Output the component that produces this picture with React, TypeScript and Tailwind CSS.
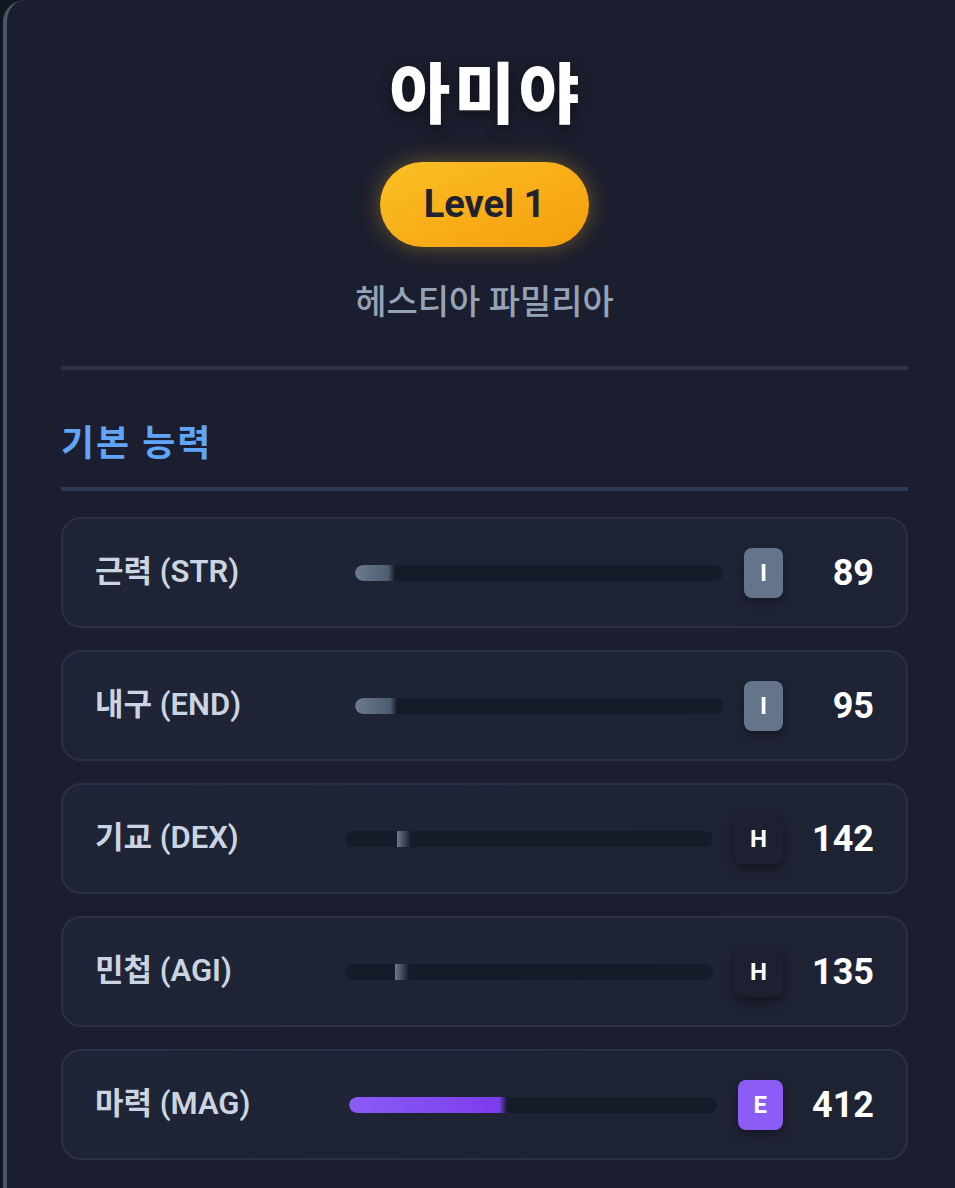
import React from 'react';

type Stat = {
  label: string;
  value: number;
  rank: string;
};

const stats: Stat[] = [
  { label: '근력 (STR)', value: 89, rank: 'I' },
  { label: '내구 (END)', value: 95, rank: 'I' },
  { label: '기교 (DEX)', value: 142, rank: 'H' },
  { label: '민첩 (AGI)', value: 135, rank: 'H' },
  { label: '마력 (MAG)', value: 412, rank: 'E' },
];

const MAX_STAT = 999;

const rankBadge: Record<string, string> = {
  I: 'bg-[#64748b] shadow-[0_4px_10px_rgba(0,0,0,0.35)]',
  H: 'bg-[#1c2030] shadow-[0_4px_12px_rgba(0,0,0,0.45)]',
  E: 'bg-[#8b5cf6] shadow-[0_4px_12px_rgba(0,0,0,0.35)]',
};

const rankFill: Record<string, string> = {
  I: 'bg-gradient-to-r from-[#6b7a90] to-[#4f5d72]',
  H: 'bg-transparent',
  E: 'bg-gradient-to-r from-[#8b5cf6] to-[#7c3aed]',
};

const rankGlow: Record<string, string> = {
  I: 'w-[7px] from-[#4f5d72]',
  H: 'w-[14px] from-[#70778a]',
  E: 'w-[7px] from-[#6d3fd6]',
};

const StatRow: React.FC<{ stat: Stat }> = ({ stat }) => {
  const pct = (stat.value / MAX_STAT) * 100;
  return (
    <div className="flex items-center h-[111px] px-8 rounded-[20px] border-2 border-[#2b3144] bg-gradient-to-br from-[#1f2436] to-[#1e2334]">
      <span className="flex-1 text-[31px] font-semibold text-[#cbd5e1]">{stat.label}</span>
      <div className="relative w-[368px] h-4 rounded-full bg-[#161b2a] overflow-hidden">
        <div className={`h-full rounded-l-full ${rankFill[stat.rank]}`} style={{ width: `${pct}%` }} />
        {/* soft edge at the end of the fill */}
        <div
          className={`absolute top-0 h-full bg-gradient-to-r ${rankGlow[stat.rank]} to-transparent`}
          style={{ left: `${pct}%` }}
        />
      </div>
      <div
        className={`ml-[21px] h-[50px] px-4 rounded-lg flex items-center text-[24px] font-bold text-white ${rankBadge[stat.rank]}`}
      >
        {stat.rank}
      </div>
      <span className="w-[91px] text-right text-[36px] font-bold text-white">{stat.value}</span>
    </div>
  );
};

export default function App() {
  return (
    <div
      className="w-[955px] h-[1188px] overflow-hidden bg-[#111920]"
      style={{ fontFamily: 'Roboto, "Noto Sans CJK KR", sans-serif' }}
    >
      <div className="ml-[3px] w-[959px] min-h-[1188px] rounded-tl-[22px] border-l-4 border-[#4a5568] bg-[#1b1e2e] pl-[54px] pr-[54px] pt-[56px]">
        <div className="flex flex-col items-center">
          <h1 className="pl-[4px] text-[66px] leading-[1.2] font-extrabold tracking-[4px] text-white [text-shadow:0_4px_12px_rgba(0,0,0,0.5)]">
            아미야
          </h1>
          <div className="mt-[27px] h-[85px] px-[44px] rounded-full flex items-center bg-gradient-to-br from-[#fbbf24] to-[#f59e0b] shadow-[0_0_22px_rgba(251,191,36,0.35)]">
            <span className="text-[38px] font-bold text-[#1f2230]">Level 1</span>
          </div>
          <p className="mt-[30px] text-[34px] font-medium text-[#94a3b8]">헤스티아 파밀리아</p>
        </div>

        <div className="mt-[38px] h-1 bg-[#2e3244]" />

        <h2 className="mt-[47px] text-[36px] font-bold tracking-[2px] text-[#60a5fa]">기본 능력</h2>
        <div className="mt-[16px] h-1 bg-[#2b3a56]" />

        <div className="mt-[26px] flex flex-col gap-[22px]">
          {stats.map((s) => (
            <StatRow key={s.label} stat={s} />
          ))}
        </div>
      </div>
    </div>
  );
}
